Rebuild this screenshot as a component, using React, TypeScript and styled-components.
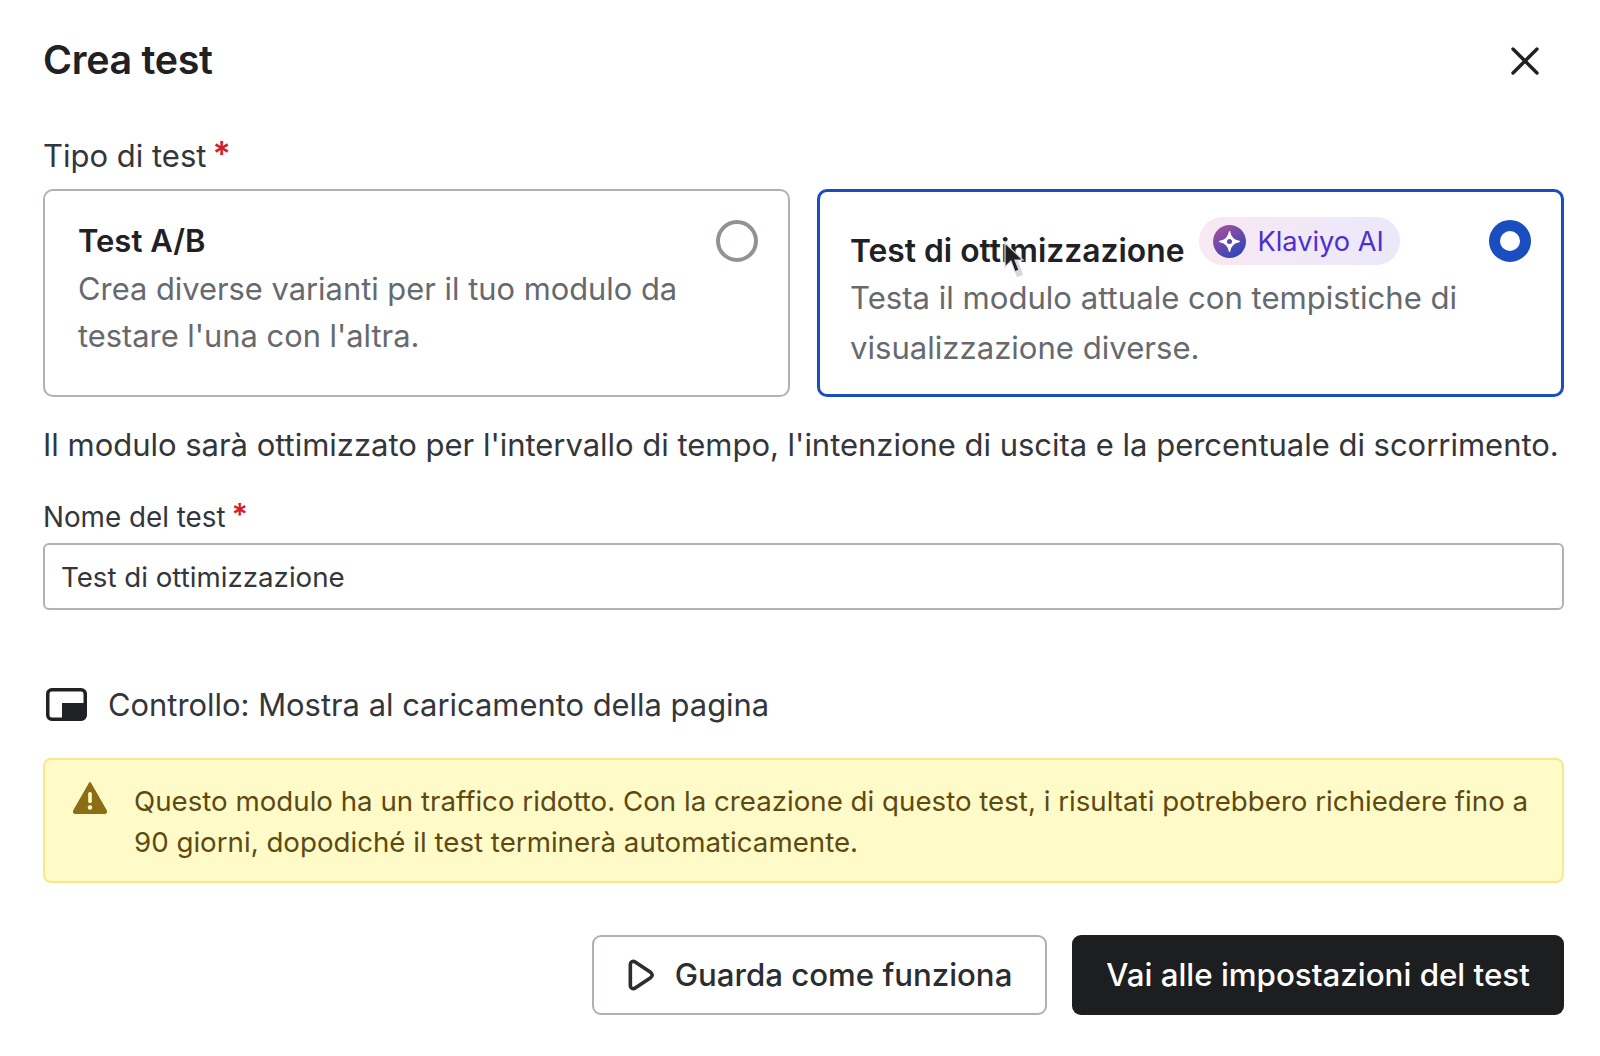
import React from "react";
import styled, { createGlobalStyle } from "styled-components";

const Global = createGlobalStyle`
  html, body { margin: 0; padding: 0; background: #fff; }
  body { font-family: Inter, "Noto Sans", sans-serif; color: #1f2124; }
`;
const Page = styled.div`
  width: 1600px; height: 1056px; box-sizing: border-box; padding: 37px 36px 0 43px;
  display: flex; flex-direction: column; overflow: hidden;
`;
const Header = styled.header`
  display: flex; justify-content: space-between; align-items: center; height: 46px; margin-bottom: 53px;
`;
const Title = styled.h1`
  margin: 0; font-size: 39.4px; line-height: 46px; font-weight: 600; color: #1f2124; letter-spacing: -0.3px;
`;
const CloseButton = styled.button`
  border: 0; background: none; padding: 0; width: 34px; height: 34px; margin: 2px 22px 0 0; color: #1f2124;
  display: flex; align-items: center; justify-content: center;
`;
const Label = styled.div<{ $size: number; $height: number }>`
  font-size: ${p => p.$size}px; line-height: ${p => p.$height}px; color: #33363a;
  display: flex; align-items: flex-start; height: ${p => p.$height}px;
`;
const Star = styled.span`
  color: #d21f2b; margin-left: 6px; font-size: 1.1em; line-height: 1.05; font-weight: 600;
`;
const Cards = styled.div`
  display: grid; grid-template-columns: 747px 747px; gap: 27px; margin-top: 13px;
`;
const Card = styled.div<{ $selected?: boolean }>`
  position: relative; box-sizing: border-box; height: 208px; border-radius: 10px; background: #fff;
  border: ${p => (p.$selected ? "3px solid #1a4dbf" : "2px solid #afb1b4")};
  padding: ${p => (p.$selected ? "26px 32px 0 30px" : "27px 33px 0 33px")};
`;
const CardTitleRow = styled.div<{ $height: number }>`
  display: flex; align-items: flex-start; gap: 15px; height: ${p => p.$height}px;
`;
const CardTitle = styled.div<{ $offset?: number; $size: number }>`
  font-size: ${p => p.$size}px; line-height: 46px; font-weight: 600; color: #1f2124; margin-top: ${p => p.$offset ?? 0}px;
`;
const CardText = styled.div<{ $lh: number; $size: number }>`
  font-size: ${p => p.$size}px; line-height: ${p => p.$lh}px; color: #66696d;
`;
const Radio = styled.div<{ $selected?: boolean }>`
  position: absolute; top: 29px; right: 30px; width: 42px; height: 42px; box-sizing: border-box;
  border-radius: 50%; background: #fff;
  border: ${p => (p.$selected ? "11.5px solid #1a4dbf" : "4px solid #8f9296")};
  ${p => (p.$selected ? "top: 28px;" : "")}
`;
const Badge = styled.span`
  display: inline-flex; align-items: center; gap: 11px; height: 48px; box-sizing: border-box; padding: 0 16px 0 14px;
  border-radius: 24px; background: linear-gradient(90deg, #f8e9f2 0%, #ebe8fb 100%);
  color: #4c2fd0; font-size: 27.2px; margin-top: -1px;
`;
const Cursor = styled.svg`
  position: absolute; left: 183px; top: 50px; width: 22px; height: 38px;
`;
const Note = styled.p`
  margin: 26px 0 0; font-size: 31px; line-height: 44px; color: #33363a; white-space: nowrap; letter-spacing: -0.02px;
`;
const FieldLabel = styled(Label)`
  margin-top: 32px;
`;
const Input = styled.div`
  box-sizing: border-box; margin-top: 8px; height: 67px; border: 2px solid #afb1b4; border-radius: 6px;
  padding: 0 16px; display: flex; align-items: center; font-size: 27.7px; color: #33363a;
`;
const ControlRow = styled.div`
  display: flex; align-items: center; gap: 21px; margin-top: 70px; height: 48px; font-size: 30.9px; color: #33363a;
`;
const ControlIcon = styled.svg`
  flex: none; width: 41px; height: 33px; margin-left: 3px;
`;
const Alert = styled.div`
  box-sizing: border-box; margin-top: 30px; height: 125px; border: 2px solid #f7e98a; border-radius: 8px;
  background: #fffbc9; padding: 21px 30px 0 27px; display: flex; gap: 26px;
  color: #5e4a10; font-size: 27.7px; line-height: 40.6px; white-space: nowrap;
`;
const AlertIcon = styled.svg`
  flex: none; width: 36px; height: 34px;
`;
const Actions = styled.div`
  display: flex; justify-content: flex-end; gap: 25px; margin-top: 52px;
`;
const Button = styled.button<{ $primary?: boolean }>`
  box-sizing: border-box; height: 80px; border-radius: 9px; font: inherit; font-size: ${p => (p.$primary ? "31.3px" : "31.2px")}; font-weight: 500;
  display: inline-flex; align-items: center; justify-content: center; gap: 20px;
  background: ${p => (p.$primary ? "#1c1e20" : "#fff")};
  color: ${p => (p.$primary ? "#fff" : "#2b2d30")};
  border: ${p => (p.$primary ? "0" : "2px solid #afb1b4")};
  width: ${p => (p.$primary ? "492px" : "455px")};
`;

export default function App() {
  return (
    <Page>
      <Global />
      <Header>
        <Title>Crea test</Title>
        <CloseButton aria-label="Chiudi">
          <svg width="28" height="28" viewBox="0 0 28 28" fill="none" stroke="currentColor" strokeWidth="3.4" strokeLinecap="round">
            <path d="M2 2 26 26M26 2 2 26" />
          </svg>
        </CloseButton>
      </Header>
      <Label $size={31} $height={40}>Tipo di test<Star>*</Star></Label>
      <Cards>
        <Card>
          <CardTitleRow $height={47}><CardTitle $size={31}>Test A/B</CardTitle></CardTitleRow>
          <CardText $lh={47} $size={30.85}>Crea diverse varianti per il tuo modulo da<br />testare l'una con l'altra.</CardText>
          <Radio />
        </Card>
        <Card $selected>
          <CardTitleRow $height={55}>
            <CardTitle $offset={10} $size={31.8}>Test di ottimizzazione</CardTitle>
            <Badge>
              <svg width="33" height="33" viewBox="0 0 34 34">
                <defs>
                  <linearGradient id="kl" x1="0" y1="0" x2="0.7" y2="1">
                    <stop offset="0" stopColor="#b4509a" />
                    <stop offset="1" stopColor="#2f45bb" />
                  </linearGradient>
                </defs>
                <circle cx="17" cy="17" r="17" fill="url(#kl)" />
                <path d="M17 7C18 13 21 16 27 17 21 18 18 21 17 27 16 21 13 18 7 17 13 16 16 13 17 7Z" fill="#fff" stroke="#fff" strokeWidth="1.5" strokeLinejoin="round" />
                <circle cx="17" cy="17" r="2.6" fill="#5a49b0" />
              </svg>
              Klaviyo AI
            </Badge>
          </CardTitleRow>
          <CardText $lh={50} $size={31.1}>Testa il modulo attuale con tempistiche di<br />visualizzazione diverse.</CardText>
          <Radio $selected />
          <Cursor viewBox="0 0 22 38">
            <path d="M7 16 14 35 20 33 14 16Z" fill="#c4c4c4" opacity="0.7" />
            <path d="M2 1V25L8 19 12 30 16 28 12 18H20Z" fill="#1f2124" stroke="#dcdcdc" strokeWidth="1.2" />
          </Cursor>
        </Card>
      </Cards>
      <Note>Il modulo sarà ottimizzato per l'intervallo di tempo, l'intenzione di uscita e la percentuale di scorrimento.</Note>
      <FieldLabel $size={27.8} $height={36}>Nome del test<Star>*</Star></FieldLabel>
      <Input>Test di ottimizzazione</Input>
      <ControlRow>
        <ControlIcon viewBox="0 0 41 33">
          <rect x="1.75" y="1.75" width="37.5" height="29.5" rx="4" fill="#fff" stroke="#1f2124" strokeWidth="3.5" />
          <path d="M16 15H39V27A4 4 0 0 1 35 31H16Z" fill="#1f2124" />
        </ControlIcon>
        Controllo: Mostra al caricamento della pagina
      </ControlRow>
      <Alert>
        <AlertIcon viewBox="0 0 36 34">
          <path d="M18 2 34 30A1.5 1.5 0 0 1 33 32H3A1.5 1.5 0 0 1 2 30Z" fill="#8a6d14" stroke="#8a6d14" strokeWidth="2" strokeLinejoin="round" />
          <rect x="16.2" y="11" width="3.6" height="11" rx="1.6" fill="#fffbc9" />
          <circle cx="18" cy="26.5" r="2.2" fill="#fffbc9" />
        </AlertIcon>
        <div>Questo modulo ha un traffico ridotto. Con la creazione di questo test, i risultati potrebbero richiedere fino a<br />90 giorni, dopodiché il test terminerà automaticamente.</div>
      </Alert>
      <Actions>
        <Button>
          <svg width="28" height="32" viewBox="0 0 26 30" fill="none" stroke="currentColor" strokeWidth="3.4" strokeLinejoin="round">
            <path d="M3 5C3 2.5 5.5 1.5 7.5 2.8L22 12.5C24 14 24 16 22 17.5L7.5 27.2C5.5 28.5 3 27.5 3 25Z" />
          </svg>
          Guarda come funziona
        </Button>
        <Button $primary>Vai alle impostazioni del test</Button>
      </Actions>
    </Page>
  );
}
